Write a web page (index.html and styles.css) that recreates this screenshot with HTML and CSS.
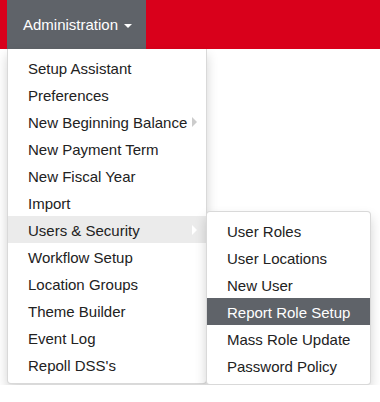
FILE: index.html
```html
<!DOCTYPE html>
<html lang="en">
<head>
    <meta charset="UTF-8">
    <meta name="viewport" content="width=device-width, initial-scale=1.0">
    <title>Administration</title>
    <link rel="stylesheet" href="styles.css">
</head>
<body>
    <nav class="navbar">
        <a href="#" class="nav-link">Administration <span class="caret"></span></a>
    </nav>

    <div class="menus">
        <ul class="menu main-menu">
            <li><a href="#">Setup Assistant</a></li>
            <li><a href="#">Preferences</a></li>
            <li class="has-sub"><a href="#">New Beginning Balance</a></li>
            <li><a href="#">New Payment Term</a></li>
            <li><a href="#">New Fiscal Year</a></li>
            <li><a href="#">Import</a></li>
            <li class="has-sub hovered"><a href="#">Users &amp; Security</a></li>
            <li><a href="#">Workflow Setup</a></li>
            <li><a href="#">Location Groups</a></li>
            <li><a href="#">Theme Builder</a></li>
            <li><a href="#">Event Log</a></li>
            <li><a href="#">Repoll DSS's</a></li>
        </ul>

        <ul class="menu sub-menu">
            <li><a href="#">User Roles</a></li>
            <li><a href="#">User Locations</a></li>
            <li><a href="#">New User</a></li>
            <li class="current"><a href="#">Report Role Setup</a></li>
            <li><a href="#">Mass Role Update</a></li>
            <li><a href="#">Password Policy</a></li>
        </ul>
    </div>
</body>
</html>
```

FILE: styles.css
```css
* {
    box-sizing: border-box;
}

body {
    margin: 0;
    font-family: 'Liberation Sans', Arial, sans-serif;
    font-size: 15px;
    color: #222;
    background: #fff;
}

ul {
    list-style: none;
    margin: 0;
    padding: 0;
}

a {
    text-decoration: none;
    color: inherit;
}

.navbar {
    display: flex;
    background-color: #d9001b;
    height: 49px;
    padding-left: 7px;
}

.nav-link {
    display: flex;
    align-items: center;
    height: 49px;
    padding: 0 14px 0 16px;
    color: #fff;
    background-color: #5f6369;
    white-space: pre;
}

.caret {
    display: inline-block;
    width: 0;
    height: 0;
    margin-left: 2px;
    margin-top: 2px;
    border-top: 4px solid #fff;
    border-left: 4px solid transparent;
    border-right: 4px solid transparent;
}

.menus {
    display: flex;
    align-items: flex-start;
    padding-left: 7px;
}

.menu {
    padding: 5px 0;
    background: #fff;
    border: 1px solid rgba(0, 0, 0, 0.15);
    box-shadow: 0 6px 12px rgba(0, 0, 0, 0.175);
}

.menu li a {
    display: flex;
    justify-content: space-between;
    align-items: center;
    padding: 4px 20px 2px;
    line-height: 21px;
    white-space: nowrap;
}

.main-menu {
    width: 200px;
    border-top: none;
    border-radius: 0 0 4px 4px;
}

.has-sub > a::after {
    content: "";
    margin-top: -2px;
    margin-right: -11px;
    border-left: 5px solid #ccc;
    border-top: 5px solid transparent;
    border-bottom: 5px solid transparent;
}

.has-sub.hovered > a {
    background-color: #ebebeb;
}

.has-sub.hovered > a::after {
    border-left-color: #fff;
}

.sub-menu {
    width: 165px;
    margin-top: 162px;
    margin-left: -1px;
    border-radius: 4px;
}

.sub-menu li.current a {
    background-color: #5f6369;
    color: #fff;
}
```
